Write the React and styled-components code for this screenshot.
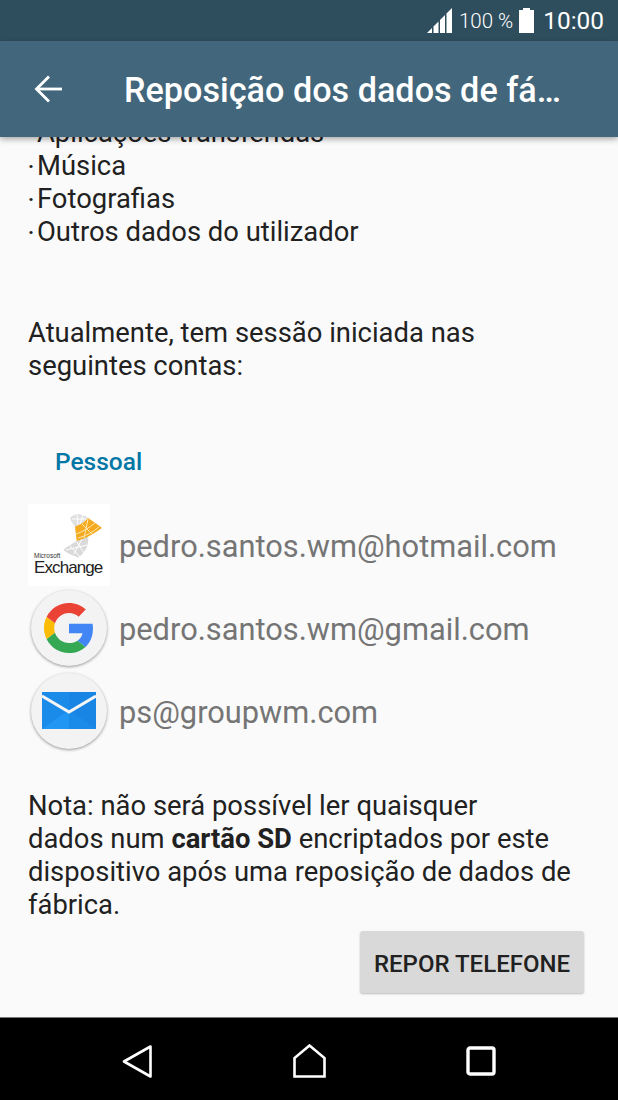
import React from "react";
import styled, { createGlobalStyle } from "styled-components";

const GlobalStyle = createGlobalStyle`
  html, body {
    margin: 0;
    padding: 0;
    background: #fafafa;
  }
  * {
    box-sizing: border-box;
  }
`;

const Screen = styled.div`
  width: 618px;
  height: 1100px;
  display: flex;
  flex-direction: column;
  overflow: hidden;
  font-family: Roboto, "Liberation Sans", sans-serif;
  background: #fafafa;
`;

// status bar
const StatusBar = styled.div`
  height: 41px;
  flex: none;
  background: #2f4e5d;
  color: #fff;
  display: flex;
  align-items: center;
  justify-content: flex-end;
  padding-right: 14px;
`;

const BatteryText = styled.span`
  font-size: 20.5px;
  font-weight: 300;
  margin-left: 7px;
  margin-right: 5px;
`;

const Clock = styled.span`
  font-size: 24.4px;
  font-weight: 400;
  margin-left: 8px;
`;

// app bar
const AppBar = styled.header`
  height: 96px;
  flex: none;
  background: #42667b;
  display: flex;
  align-items: center;
  color: #fff;
  position: relative;
  z-index: 2;
  box-shadow: 0 2px 6px rgba(0, 0, 0, 0.35);
`;

const BackButton = styled.div`
  width: 124px;
  flex: none;
  padding-left: 34px;
  display: flex;
  align-items: center;
`;

const Title = styled.h1`
  margin: 0;
  padding-top: 2px;
  font-size: 34.2px;
  font-weight: 500;
  white-space: nowrap;
`;

// content
const Content = styled.main`
  flex: 1;
  overflow: hidden;
  padding: 0 34px 0 28px;
`;

const Inner = styled.div`
  margin-top: -20px;
  color: #212121;
  font-size: 27.4px;
  line-height: 33px;
`;

const Bullet = styled.div`
  display: flex;
  white-space: nowrap;
`;

const Dot = styled.span`
  width: 9px;
  flex: none;
  font-weight: 700;
  font-size: 20px;
`;

const Paragraph = styled.p`
  margin: ${(props) => props.$top}px 0 0;
  white-space: nowrap;
`;

const SectionTitle = styled.h2`
  margin: 62px 0 25px 27px;
  font-size: 24.5px;
  line-height: 33px;
  font-weight: 500;
  color: #0277a6;
`;

const AccountRow = styled.div`
  height: 83px;
  display: flex;
  align-items: center;
  gap: 9px;
`;

const AccountName = styled.span`
  padding-top: 4px;
  color: #757575;
  font-size: 30.8px;
  white-space: nowrap;
`;

const ExchangeTile = styled.div`
  width: 82px;
  height: 82px;
  flex: none;
  background: #fff;
  display: flex;
  flex-direction: column;
  padding: 9px 7px 0 6px;
`;

const LogoSlot = styled.div`
  align-self: flex-end;
  height: 46px;
`;

const ExchangeSmall = styled.span`
  font-family: "Liberation Sans", sans-serif;
  font-size: 6.5px;
  line-height: 6px;
  margin-top: -6px;
  color: #333;
`;

const ExchangeBig = styled.span`
  font-family: "Liberation Sans", sans-serif;
  font-size: 17px;
  line-height: 18px;
  letter-spacing: -0.9px;
  color: #222;
  white-space: nowrap;
`;

const RoundIcon = styled.div`
  width: 76px;
  height: 76px;
  margin: 0 3px;
  flex: none;
  border-radius: 50%;
  background: #f3f3f3;
  box-shadow: 0 1px 3px rgba(0, 0, 0, 0.4);
  display: flex;
  align-items: center;
  justify-content: center;
`;

const ButtonRow = styled.div`
  display: flex;
  justify-content: flex-end;
  margin-top: 9px;
`;

const ResetButton = styled.button`
  width: 224px;
  height: 62px;
  border: none;
  border-radius: 3px;
  background: #d9d9d9;
  color: #212121;
  font-family: inherit;
  font-size: 24px;
  font-weight: 500;
  padding: 4px 0 0;
  white-space: nowrap;
  box-shadow: 0 1px 2px rgba(0, 0, 0, 0.25);
`;

// nav bar
const NavBar = styled.nav`
  height: 83px;
  flex: none;
  background: #000;
  border-top: 1px solid #777;
  padding-top: 4px;
  display: flex;
  align-items: center;
  justify-content: center;
`;

const NavSlot = styled.div`
  width: 172px;
  display: flex;
  justify-content: center;
`;

const SignalIcon = () => (
  <svg width="25" height="25" viewBox="0 0 25 25" fill="#fff">
    <path d="M0 25 L5 20 V25 Z" />
    <path d="M6.5 18.5 L11.5 13.5 V25 H6.5 Z" />
    <path d="M13 12 L18 7 V25 H13 Z" />
    <path d="M19.5 5.5 L25 0 V25 H19.5 Z" />
  </svg>
);

const BatteryIcon = () => (
  <svg width="17" height="25" viewBox="0 0 17 25">
    <path d="M5 0 H12 V2 H16 V25 H1 V2 H5 Z" fill="#fff" />
  </svg>
);

const ExchangeLogo = () => (
  <svg width="41" height="46" viewBox="0 0 41 46">
    <path d="M8 5 C11 1 19 -1 26 5 C23 9 18 12 13 14 C11 11 9 8 8 5 Z" fill="#e0e0e0" />
    <path d="M14.7 28 L26 23 C27 30 25 38 16.5 44.5 C11 43 5 40 1.3 37 C5 33 11 31 14.7 28 Z" fill="#dadada" />
    <path d="M13 13.5 C18 12 23 9 26 5 C31 8 36 12 40 15 C33 20 25 25 14.7 28 C14 23 13.5 18 13 13.5 Z" fill="#f4ab20" />
    <path d="M14 21 C20 19 27 15 33 10 M16 25 C24 23 31 19 37 14 M20 11 L30 21 M26 6 L22 25" stroke="#fde7b4" strokeWidth="1" fill="none" />
    <path d="M10 6 L24 6 M15 2 L16 12 M21 2 L18 11" stroke="#fff" strokeWidth="1" fill="none" />
    <path d="M4 37 L25 32 M8 33 L18 44 M15 29 L22 40 M20 26 L12 41" stroke="#fff" strokeWidth="1" fill="none" />
  </svg>
);

const GoogleLogo = () => (
  <svg width="50" height="50" viewBox="0 0 48 48">
    <path fill="#4285f4" d="M46.98 24.55c0-1.57-.15-3.09-.38-4.55H24v9.02h12.94c-.58 2.96-2.26 5.48-4.78 7.18l7.73 6c4.51-4.18 7.09-10.36 7.09-17.65z" />
    <path fill="#fbbc05" d="M10.53 28.59c-.48-1.45-.76-2.99-.76-4.59s.27-3.14.76-4.59l-7.98-6.19C.92 16.46 0 20.12 0 24c0 3.88.92 7.54 2.56 10.78l7.97-6.19z" />
    <path fill="#ea4335" d="M24 9.5c3.54 0 6.71 1.22 9.21 3.6l6.85-6.85C35.9 2.38 30.47 0 24 0 14.62 0 6.51 5.38 2.56 13.22l7.98 6.19C12.43 13.72 17.74 9.5 24 9.5z" />
    <path fill="#34a853" d="M24 48c6.48 0 11.93-2.13 15.89-5.81l-7.73-6c-2.15 1.45-4.92 2.3-8.16 2.3-6.26 0-11.57-4.22-13.47-9.91l-7.98 6.19C6.51 42.62 14.62 48 24 48z" />
  </svg>
);

const MailLogo = () => (
  <svg width="54" height="37" viewBox="0 0 54 37">
    <rect width="54" height="37" fill="#1b8bea" />
    <path d="M0 37 L27 18 L54 37 Z" fill="#2196f3" />
    <path d="M27 0 H54 V37 H27 Z" fill="#1580e0" opacity="0.5" />
    <path d="M0 4 L27 20 L54 4" stroke="#f5f5f5" strokeWidth="3" fill="none" />
  </svg>
);

const App = () => {
  return (
    <>
      <GlobalStyle />
      <Screen>
        <StatusBar>
          <SignalIcon />
          <BatteryText>100 %</BatteryText>
          <BatteryIcon />
          <Clock>10:00</Clock>
        </StatusBar>

        <AppBar>
          <BackButton>
            <svg width="29" height="28" viewBox="0 0 29 28" fill="none" stroke="#fff" strokeWidth="2.8">
              <path d="M28 14 H3" />
              <path d="M15 1.5 L2.5 14 L15 26.5" />
            </svg>
          </BackButton>
          <Title>Reposição dos dados de fá…</Title>
        </AppBar>

        <Content>
          <Inner>
            {["Aplicações transferidas", "Música", "Fotografias", "Outros dados do utilizador"].map((item) => (
              <Bullet key={item}>
                <Dot>·</Dot>
                {item}
              </Bullet>
            ))}

            <Paragraph $top={68}>
              Atualmente, tem sessão iniciada nas
              <br />
              seguintes contas:
            </Paragraph>

            <SectionTitle>Pessoal</SectionTitle>

            <AccountRow>
              <ExchangeTile>
                <LogoSlot>
                  <ExchangeLogo />
                </LogoSlot>
                <ExchangeSmall>Microsoft</ExchangeSmall>
                <ExchangeBig>Exchange</ExchangeBig>
              </ExchangeTile>
              <AccountName>pedro.santos.wm@hotmail.com</AccountName>
            </AccountRow>
            <AccountRow>
              <RoundIcon>
                <GoogleLogo />
              </RoundIcon>
              <AccountName>pedro.santos.wm@gmail.com</AccountName>
            </AccountRow>
            <AccountRow>
              <RoundIcon>
                <MailLogo />
              </RoundIcon>
              <AccountName>ps@groupwm.com</AccountName>
            </AccountRow>

            <Paragraph $top={38}>
              Nota: não será possível ler quaisquer
              <br />
              dados num <b>cartão SD</b> encriptados por este
              <br />
              dispositivo após uma reposição de dados de
              <br />
              fábrica.
            </Paragraph>

            <ButtonRow>
              <ResetButton>REPOR TELEFONE</ResetButton>
            </ButtonRow>
          </Inner>
        </Content>

        <NavBar>
          <NavSlot>
            <svg width="30" height="33" viewBox="0 0 30 33" fill="none" stroke="#fff" strokeWidth="2.6" strokeLinejoin="round">
              <path d="M28.5 1.5 L2 16.5 L28.5 31.5 Z" />
            </svg>
          </NavSlot>
          <NavSlot>
            <svg width="33" height="34" viewBox="0 0 33 34" fill="none" stroke="#fff" strokeWidth="2.6">
              <path d="M1.5 32.5 V14 L16.5 1.5 L31.5 14 V32.5 Z" />
            </svg>
          </NavSlot>
          <NavSlot>
            <svg width="30" height="30" viewBox="0 0 30 30" fill="none" stroke="#fff" strokeWidth="3.4">
              <rect x="2" y="2" width="26" height="26" rx="2" />
            </svg>
          </NavSlot>
        </NavBar>
      </Screen>
    </>
  );
};

export default App;
